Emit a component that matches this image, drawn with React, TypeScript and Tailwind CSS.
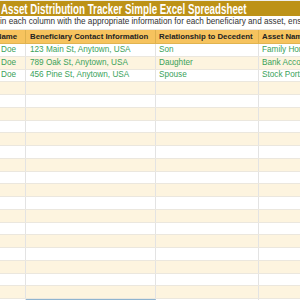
import React from "react";

const data = [
  { a: "Doe", b: "123 Main St, Anytown, USA", c: "Son", d: "Family Home" },
  { a: "Doe", b: "789 Oak St, Anytown, USA", c: "Daughter", d: "Bank Account" },
  { a: "Doe", b: "456 Pine St, Anytown, USA", c: "Spouse", d: "Stock Portfolio" },
];

function Row({ r, i, sel }: { r?: { a: string; b: string; c: string; d: string }; i: number; sel?: boolean }) {
  const bg = i % 2 === 0 ? "bg-white" : "bg-[#fdf4df]";
  return (
    <div className={`flex h-[12.75px] shrink-0 border-b border-[#ebe7de] ${bg} text-[8.2px] leading-none text-[#3aa25a]`}>
      <div className="w-[26px] shrink-0 border-r border-[#e3e3e3] flex items-center overflow-hidden pl-[1px] whitespace-nowrap">{r?.a}</div>
      <div className={`w-[130px] shrink-0 border-r border-[#e3e3e3] flex items-center overflow-hidden pl-[4px] whitespace-nowrap ${sel ? "border-t-2 border-t-[#8fb4d0]" : ""}`}>{r?.b}</div>
      <div className="w-[103px] shrink-0 border-r border-[#e3e3e3] flex items-center overflow-hidden pl-[3px] whitespace-nowrap">{r?.c}</div>
      <div className="flex-1 flex items-center overflow-hidden pl-[3px] whitespace-nowrap">{r?.d}</div>
    </div>
  );
}

export default function App() {
  const rows = Array.from({ length: 21 }, (_, i) => i);
  return (
    <div className="w-[300px] h-[300px] overflow-hidden bg-white flex flex-col" style={{ fontFamily: "'Liberation Sans', Arial, sans-serif" }}>
      <div className="h-[1px] shrink-0 bg-[#eeeeee]" />
      <div className="h-[15px] shrink-0 bg-[#bd9217] text-white flex items-center pl-[1px] whitespace-nowrap overflow-hidden">
        <span className="inline-block origin-left scale-x-[0.65] font-bold text-[15px] leading-none">
          Asset Distribution Tracker Simple Excel Spreadsheet
        </span>
      </div>
      <div className="h-[14px] shrink-0 bg-white border-b border-[#e6e6e6] flex items-center whitespace-nowrap overflow-hidden text-[8.2px] leading-none text-[#333333]">
        in each column with the appropriate information for each beneficiary and asset, ensure
      </div>
      <div className="flex h-[14px] shrink-0 bg-[#f6c35e] border-b border-[#e0b451] text-[7.8px] font-bold leading-none text-[#222222]">
        <div className="w-[26px] shrink-0 border-r border-[#deb14f] flex items-center justify-end pr-[8px] overflow-hidden whitespace-nowrap">Name</div>
        <div className="w-[130px] shrink-0 border-r border-[#deb14f] flex items-center pl-[4px] overflow-hidden whitespace-nowrap">Beneficiary Contact Information</div>
        <div className="w-[103px] shrink-0 border-r border-[#deb14f] flex items-center pl-[3px] overflow-hidden whitespace-nowrap">Relationship to Decedent</div>
        <div className="flex-1 flex items-center pl-[3px] overflow-hidden whitespace-nowrap">Asset Name</div>
      </div>
      {rows.map((i) => (
        <Row key={i} r={data[i]} i={i} sel={i === 20} />
      ))}
    </div>
  );
}
